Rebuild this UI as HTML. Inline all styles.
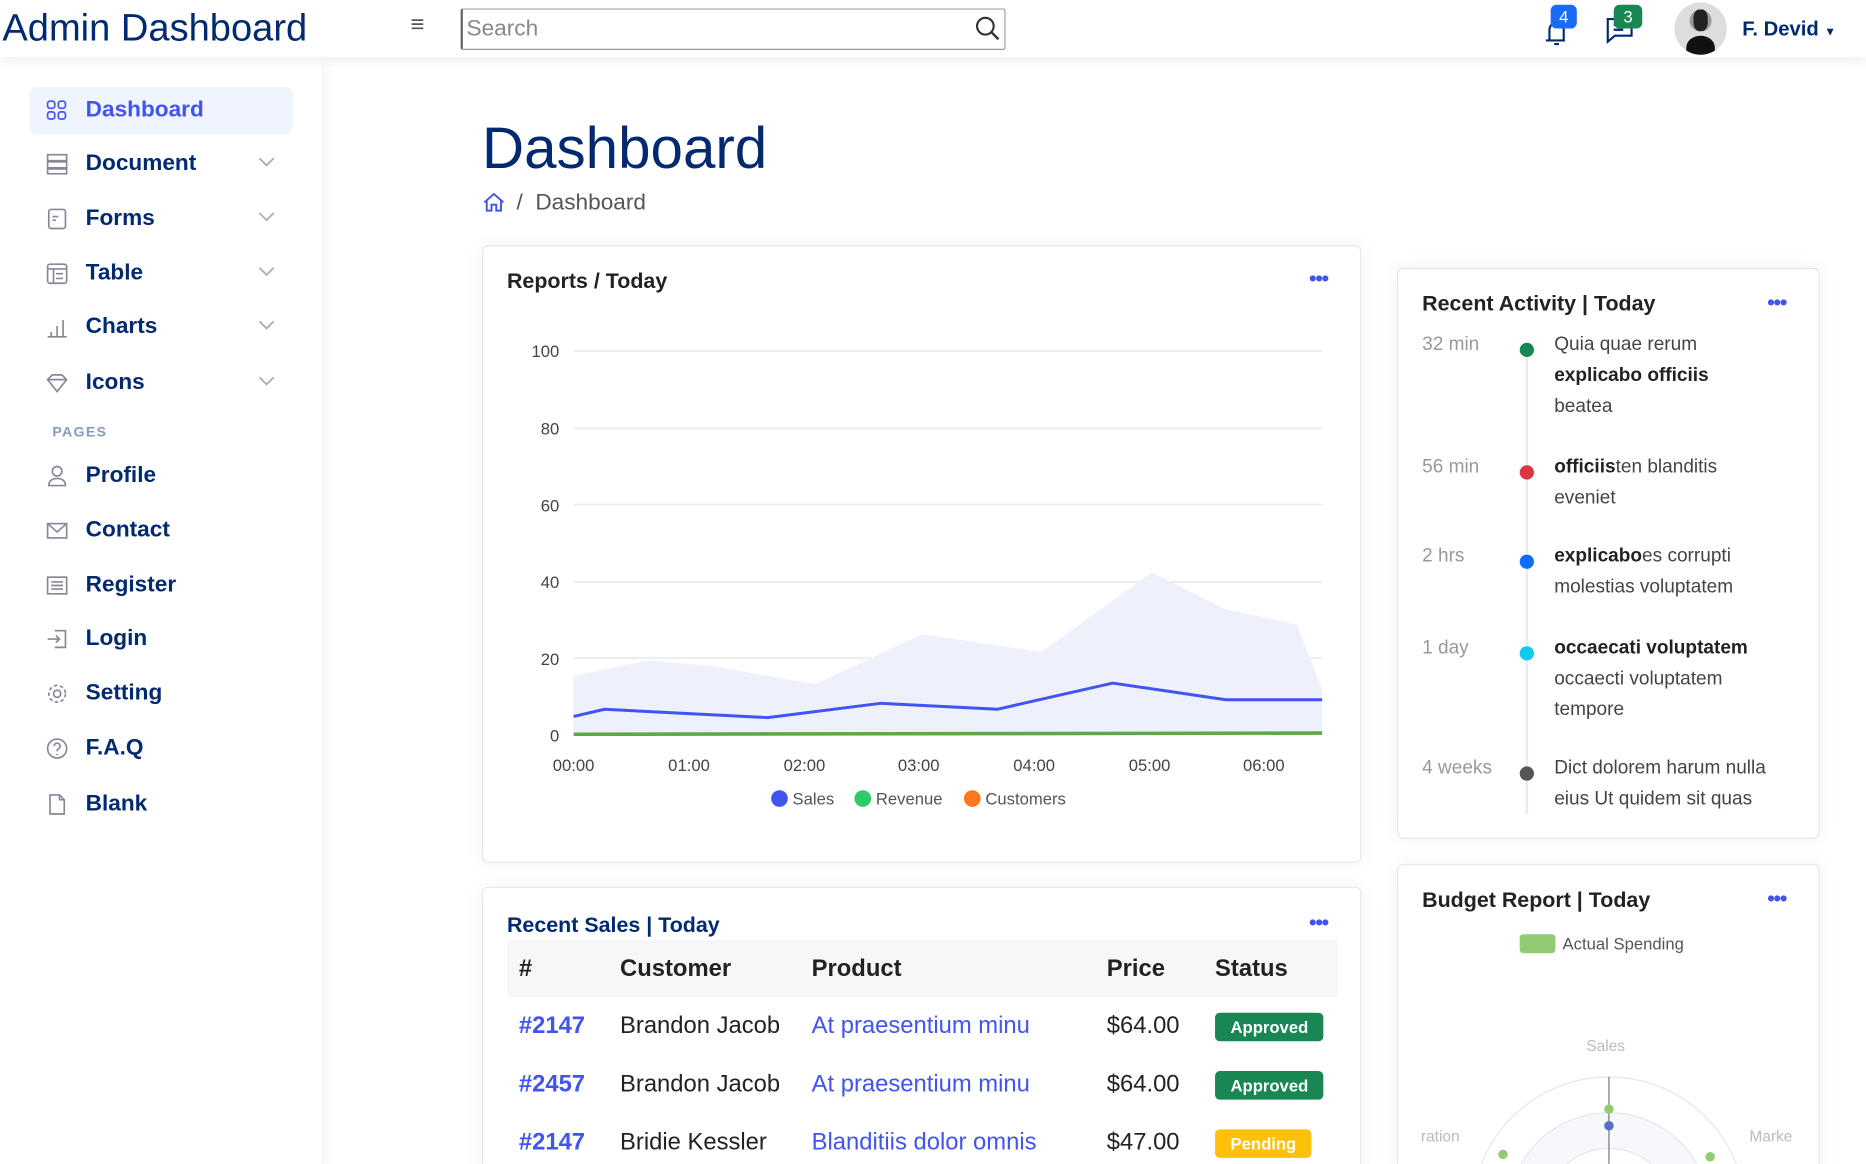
<!DOCTYPE html>
<html><head><meta charset="utf-8"><style>
*{box-sizing:border-box;margin:0;padding:0}
html,body{width:1866px;height:1164px;overflow:hidden;background:#fff;font-family:"Liberation Sans",sans-serif}
#s{position:absolute;left:0;top:0;width:1568px;height:978px;overflow:hidden;transform:scale(1.19005);transform-origin:0 0;color:#012970}
.a{position:absolute}
.hdr{left:0;top:0;width:1568px;height:48px;background:#fff;box-shadow:0 3px 10px rgba(1,41,112,.08);z-index:2}
.side{left:0;top:48px;width:270px;height:940px;background:#fff;box-shadow:2px 0 12px rgba(1,41,112,.06)}
.nav{position:absolute;left:25px;width:221px;height:40px;font-weight:bold;font-size:19px;color:#012970;display:flex;align-items:center;padding-left:13px}
.nav svg{margin-right:14px}
.nav .ch{position:absolute;right:0;top:12px}
.card{position:absolute;background:#fff;border:1px solid #e4e7ee;border-radius:5px;box-shadow:0 0 18px rgba(1,41,112,.05)}
.ct{position:absolute;font-size:18px;font-weight:bold;color:#222}
.dots{position:absolute;color:#4154f1;font-size:18px;font-weight:bold;letter-spacing:-1px}
.tl{position:absolute;font-size:16px;color:#444;line-height:26px}
.tm{position:absolute;font-size:16px;color:#999}
.dot{position:absolute;width:12px;height:12px;border-radius:50%}
td,th{font-size:20px}
.bd{display:inline-block;color:#fff;font-size:14px;font-weight:bold;padding:4px 13px;border-radius:4px}
</style></head><body><div id="s">
<div class="a hdr">
 <div class="a" style="left:2px;top:5px;font-size:32px;color:#012970">Admin Dashboard</div>
 <div class="a" style="left:345px;top:10px;font-size:20px;color:#555">≡</div>
 <div class="a" style="left:387px;top:7px;width:458px;height:35px;border:1px solid #999;border-radius:2px;border-left:2px solid #666"><span style="position:absolute;left:3px;top:6px;font-size:19px;color:#888">Search</span>
 <svg style="position:absolute;right:3px;top:5px" width="22" height="22" viewBox="0 0 22 22"><circle cx="9" cy="9" r="7" fill="none" stroke="#333" stroke-width="1.8"/><path d="M14 14l6 6" stroke="#333" stroke-width="2"/></svg></div>
 <svg class="a" style="left:1294px;top:12px" width="28" height="28" viewBox="0 0 28 28"><path d="M5 22h16M8 22V13a6 6 0 0 1 12 0v9M12 25h4" stroke="#012970" fill="none" stroke-width="1.8"/></svg>
 <div class="a" style="left:1303px;top:4px;width:22px;height:20px;background:#1a6bf5;border-radius:5px;color:#fff;font-size:14px;text-align:center;line-height:20px">4</div>
 <svg class="a" style="left:1348px;top:10px" width="28" height="28" viewBox="0 0 28 28"><path d="M3 6h20v14H9l-6 5z M8 11h10M8 15h8" stroke="#012970" fill="none" stroke-width="1.8"/></svg>
 <div class="a" style="left:1356px;top:4px;width:24px;height:20px;background:#198754;border-radius:5px;color:#fff;font-size:14px;text-align:center;line-height:20px">3</div>
 <div class="a" style="left:1407px;top:2px;width:44px;height:44px;border-radius:50%;background:radial-gradient(circle at 50% 35%,#999 0 25%,#ddd 26%);overflow:hidden"><div style="position:absolute;left:10px;top:28px;width:24px;height:20px;background:#111;border-radius:50% 50% 0 0"></div><div style="position:absolute;left:16px;top:6px;width:12px;height:18px;background:#222;border-radius:40%"></div></div>
 <div class="a" style="left:1464px;top:15px;font-size:17px;font-weight:bold">F. Devid <span style="font-size:10px">▼</span></div>
</div>
<div class="a side">
 <div class="nav" style="top:25px;background:#f0f4ff;border-radius:6px;color:#4154f1"><svg width="20" height="20" viewBox="0 0 20 20" fill="none" stroke="#4154f1" stroke-width="1.4"><rect x="2" y="2" width="6" height="6" rx="2"/><rect x="11" y="2" width="6" height="6" rx="2"/><rect x="2" y="11" width="6" height="6" rx="2"/><rect x="11" y="11" width="6" height="6" rx="2"/></svg>Dashboard</div>
</div>
<div class="nav" style="top:118px"><svg width="20" height="20" viewBox="0 0 20 20" fill="none" stroke="#889" stroke-width="1.4"><rect x="2" y="2" width="16" height="5"/><rect x="2" y="8" width="16" height="5"/><rect x="2" y="14" width="16" height="4"/></svg>Document<svg class="ch" width="16" height="12"><path d="M2 3l6 6 6-6" stroke="#aab" fill="none" stroke-width="1.5"/></svg></div>
<div class="nav" style="top:164px"><svg width="20" height="20" viewBox="0 0 20 20" fill="none" stroke="#889" stroke-width="1.4"><rect x="3" y="2" width="14" height="16" rx="2"/><path d="M6 8h5M6 11h3"/></svg>Forms<svg class="ch" width="16" height="12"><path d="M2 3l6 6 6-6" stroke="#aab" fill="none" stroke-width="1.5"/></svg></div>
<div class="nav" style="top:210px"><svg width="20" height="20" viewBox="0 0 20 20" fill="none" stroke="#889" stroke-width="1.4"><rect x="2" y="2" width="16" height="16" rx="2"/><path d="M2 6h16M7 6v12M9 10h6M9 14h6"/></svg>Table<svg class="ch" width="16" height="12"><path d="M2 3l6 6 6-6" stroke="#aab" fill="none" stroke-width="1.5"/></svg></div>
<div class="nav" style="top:255px"><svg width="20" height="20" viewBox="0 0 20 20" fill="none" stroke="#889" stroke-width="1.4"><path d="M2 18h16M5 18v-4M10 18V9M15 18V4"/></svg>Charts<svg class="ch" width="16" height="12"><path d="M2 3l6 6 6-6" stroke="#aab" fill="none" stroke-width="1.5"/></svg></div>
<div class="nav" style="top:302px"><svg width="20" height="20" viewBox="0 0 20 20" fill="none" stroke="#889" stroke-width="1.4"><path d="M2 7l4-4h8l4 4-8 10z M2 7h16"/></svg>Icons<svg class="ch" width="16" height="12"><path d="M2 3l6 6 6-6" stroke="#aab" fill="none" stroke-width="1.5"/></svg></div>
<div class="a" style="left:44px;top:356px;font-size:12px;font-weight:bold;color:#899bbd;letter-spacing:1px">PAGES</div>
<div class="nav" style="top:380px"><svg width="20" height="20" viewBox="0 0 20 20" fill="none" stroke="#889" stroke-width="1.4"><circle cx="10" cy="6" r="4"/><path d="M3 18c0-4 3-6 7-6s7 2 7 6z"/></svg>Profile</div>
<div class="nav" style="top:426px"><svg width="20" height="20" viewBox="0 0 20 20" fill="none" stroke="#889" stroke-width="1.4"><rect x="2" y="4" width="16" height="12"/><path d="M2 4l8 7 8-7"/></svg>Contact</div>
<div class="nav" style="top:472px"><svg width="20" height="20" viewBox="0 0 20 20" fill="none" stroke="#889" stroke-width="1.4"><rect x="2" y="3" width="16" height="14"/><path d="M5 7h10M5 10h10M5 13h10"/></svg>Register</div>
<div class="nav" style="top:517px"><svg width="20" height="20" viewBox="0 0 20 20" fill="none" stroke="#889" stroke-width="1.4"><path d="M8 3h9v14H8M2 10h10M9 7l3 3-3 3"/></svg>Login</div>
<div class="nav" style="top:563px"><svg width="20" height="20" viewBox="0 0 20 20" fill="none" stroke="#889" stroke-width="1.4"><circle cx="10" cy="10" r="3"/><circle cx="10" cy="10" r="7" stroke-dasharray="3 2"/></svg>Setting</div>
<div class="nav" style="top:609px"><svg width="20" height="20" viewBox="0 0 20 20" fill="none" stroke="#889" stroke-width="1.4"><circle cx="10" cy="10" r="8"/><path d="M7.5 8a2.5 2.5 0 1 1 3.5 2.3c-1 .5-1 1-1 2M10 14.5v1"/></svg>F.A.Q</div>
<div class="nav" style="top:656px"><svg width="20" height="20" viewBox="0 0 20 20" fill="none" stroke="#889" stroke-width="1.4"><path d="M4 2h8l4 4v12H4z M12 2v4h4"/></svg>Blank</div>

<div class="a" style="left:405px;top:97px;font-size:49px;color:#012970">Dashboard</div>
<svg class="a" style="left:405px;top:160px" width="20" height="20" viewBox="0 0 20 20" fill="none" stroke="#4154f1" stroke-width="1.6"><path d="M2 10L10 3l8 7M4 8v9h4v-5h4v5h4V8"/></svg>
<div class="a" style="left:434px;top:160px;font-size:19px;color:#555">/ &nbsp;Dashboard</div>

<div class="card" style="left:405px;top:206px;width:739px;height:519px"></div>
<div class="ct" style="left:426px;top:226px">Reports / Today</div>
<div class="dots" style="left:1100px;top:224px">•••</div>
<svg class="a" style="left:430px;top:280px" width="700" height="400" viewBox="430 280 700 400">
<g stroke="#ececec" stroke-width="1.5"><line x1="482" x2="1111" y1="295" y2="295"/><line x1="482" x2="1111" y1="360" y2="360"/><line x1="482" x2="1111" y1="424" y2="424"/><line x1="482" x2="1111" y1="489" y2="489"/><line x1="482" x2="1111" y1="553" y2="553"/></g>
<g font-size="14" fill="#444" text-anchor="end" font-family="Liberation Sans"><text x="470" y="300">100</text><text x="470" y="365">80</text><text x="470" y="430">60</text><text x="470" y="494">40</text><text x="470" y="559">20</text><text x="470" y="623">0</text></g>
<g font-size="14" fill="#444" text-anchor="middle" font-family="Liberation Sans"><text x="482" y="648">00:00</text><text x="579" y="648">01:00</text><text x="676" y="648">02:00</text><text x="772" y="648">03:00</text><text x="869" y="648">04:00</text><text x="966" y="648">05:00</text><text x="1062" y="648">06:00</text></g>
<path d="M482 568L545 555L600 560L685 575L775 533L875 548L968 481L1030 512L1090 525L1111 580L1111 617L482 617Z" fill="#eef0fc"/>
<path d="M482 602L508 596L645 603L740 591L838 596L935 574L1030 588L1111 588" stroke="#4154f1" stroke-width="2.5" fill="none"/>
<path d="M482 617L1111 616" stroke="#5da84a" stroke-width="3"/>
<circle cx="655" cy="671" r="7" fill="#4154f1"/><text x="666" y="676" font-size="14" fill="#555" font-family="Liberation Sans">Sales</text>
<circle cx="725" cy="671" r="7" fill="#2eca6a"/><text x="736" y="676" font-size="14" fill="#555" font-family="Liberation Sans">Revenue</text>
<circle cx="817" cy="671" r="7" fill="#ff771d"/><text x="828" y="676" font-size="14" fill="#555" font-family="Liberation Sans">Customers</text>
</svg>

<div class="card" style="left:405px;top:745px;width:739px;height:260px"></div>
<div class="ct" style="left:426px;top:767px;color:#012970">Recent Sales | Today</div>
<div class="dots" style="left:1100px;top:765px">•••</div>
<div class="a" style="left:426px;top:790px;width:698px;height:48px;background:#f6f7f9"></div>
<table class="a" style="left:426px;top:790px;width:698px;border-collapse:collapse;color:#222">
<tr style="height:48px;text-align:left"><th style="padding-left:10px;width:95px">#</th><th style="width:161px">Customer</th><th style="width:248px">Product</th><th style="width:91px">Price</th><th>Status</th></tr>
<tr style="height:49px"><td style="padding-left:10px;color:#4154f1;font-weight:bold">#2147</td><td>Brandon Jacob</td><td style="color:#4154f1">At praesentium minu</td><td>$64.00</td><td><span class="bd" style="background:#198754">Approved</span></td></tr>
<tr style="height:49px"><td style="padding-left:10px;color:#4154f1;font-weight:bold">#2457</td><td>Brandon Jacob</td><td style="color:#4154f1">At praesentium minu</td><td>$64.00</td><td><span class="bd" style="background:#198754">Approved</span></td></tr>
<tr style="height:49px"><td style="padding-left:10px;color:#4154f1;font-weight:bold">#2147</td><td>Bridie Kessler</td><td style="color:#4154f1">Blanditiis dolor omnis</td><td>$47.00</td><td><span class="bd" style="background:#ffc107">Pending</span></td></tr>
</table>

<div class="card" style="left:1174px;top:225px;width:355px;height:480px"></div>
<div class="ct" style="left:1195px;top:245px">Recent Activity | Today</div>
<div class="dots" style="left:1485px;top:244px">•••</div>
<div class="a" style="left:1282px;top:296px;width:2px;height:388px;background:#e8ecf4"></div>
<div class="tm" style="left:1195px;top:281px">32 min</div><div class="dot" style="left:1277px;top:288px;background:#198754"></div>
<div class="tl" style="left:1306px;top:277px">Quia quae rerum<br><b style="color:#222">explicabo officiis</b><br>beatea</div>
<div class="tm" style="left:1195px;top:384px">56 min</div><div class="dot" style="left:1277px;top:391px;background:#dc3545"></div>
<div class="tl" style="left:1306px;top:380px"><b style="color:#222">officiis</b>ten blanditis<br>eveniet</div>
<div class="tm" style="left:1195px;top:459px">2 hrs</div><div class="dot" style="left:1277px;top:466px;background:#0d6efd"></div>
<div class="tl" style="left:1306px;top:455px"><b style="color:#222">explicabo</b>es corrupti<br>molestias voluptatem</div>
<div class="tm" style="left:1195px;top:536px">1 day</div><div class="dot" style="left:1277px;top:543px;background:#0dcaf0"></div>
<div class="tl" style="left:1306px;top:532px"><b style="color:#222">occaecati voluptatem</b><br>occaecti voluptatem<br>tempore</div>
<div class="tm" style="left:1195px;top:637px">4 weeks</div><div class="dot" style="left:1277px;top:644px;background:#555"></div>
<div class="tl" style="left:1306px;top:633px">Dict dolorem harum nulla<br>eius Ut quidem sit quas</div>

<div class="card" style="left:1174px;top:726px;width:355px;height:270px"></div>
<div class="ct" style="left:1195px;top:746px">Budget Report | Today</div>
<div class="dots" style="left:1485px;top:745px">•••</div>
<div class="a" style="left:1277px;top:785px;width:30px;height:16px;background:#91cc75;border-radius:3px"></div>
<div class="a" style="left:1313px;top:785px;font-size:14px;color:#555">Actual Spending</div>
<div class="a" style="left:1333px;top:871px;font-size:13px;color:#bbb">Sales</div>
<div class="a" style="left:1194px;top:947px;font-size:13px;color:#bbb">ration</div>
<div class="a" style="left:1470px;top:947px;font-size:13px;color:#bbb">Marke</div>
<svg class="a" style="left:1200px;top:895px" width="310" height="90" viewBox="1200 895 310 90"><circle cx="1352" cy="1020" r="115" fill="none" stroke="#e6e6e6"/><circle cx="1352" cy="1020" r="85" fill="#f7f8fb" stroke="#e6e6e6"/><circle cx="1352" cy="1020" r="55" fill="#fff" stroke="#e6e6e6"/><line x1="1352" y1="905" x2="1352" y2="990" stroke="#777"/><circle cx="1352" cy="932" r="4" fill="#91cc75"/><circle cx="1352" cy="946" r="4" fill="#5470c6"/><circle cx="1263" cy="970" r="4" fill="#91cc75"/><circle cx="1437" cy="972" r="4" fill="#91cc75"/></svg>
</div></body></html>
